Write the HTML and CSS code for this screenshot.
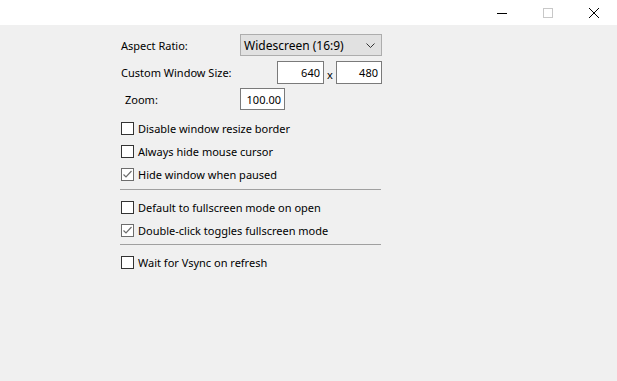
FILE: index.html
```html
<!DOCTYPE html>
<html>
<head>
<meta charset="utf-8">
<link rel="stylesheet" href="styles.css">
</head>
<body>
<div class="titlebar">
  <div class="tb-btn"><svg width="10" height="10" viewBox="0 0 10 10"><line x1="0" y1="5.5" x2="10" y2="5.5" stroke="#000" stroke-width="1"/></svg></div>
  <div class="tb-btn"><svg width="10" height="10" viewBox="0 0 10 10"><rect x="0.5" y="0.5" width="9" height="9" fill="none" stroke="#c8c8c8" stroke-width="1"/></svg></div>
  <div class="tb-btn"><svg width="10" height="10" viewBox="0 0 10 10"><path d="M0 0 L10 10 M10 0 L0 10" stroke="#000" stroke-width="1"/></svg></div>
</div>
<div class="content">
  <div class="row r1">
    <span class="label l1">Aspect Ratio:</span>
    <div class="combo"><span>Widescreen (16:9)</span><svg width="9" height="5" viewBox="0 0 9 5"><path d="M0.5 0.5 L4.5 4.5 L8.5 0.5" fill="none" stroke="#333" stroke-width="1"/></svg></div>
  </div>
  <div class="row r2">
    <span class="label l2">Custom Window Size:</span>
    <div class="tbox w47">640</div>
    <span class="times">x</span>
    <div class="tbox w46">480</div>
  </div>
  <div class="row r3">
    <span class="label l3">Zoom:</span>
    <div class="tbox w45">100.00</div>
  </div>
  <div class="checks">
    <div class="check"><span class="box"></span><span>Disable window resize border</span></div>
    <div class="check"><span class="box"></span><span>Always hide mouse cursor</span></div>
    <div class="check"><span class="box on"><svg width="11" height="11" viewBox="0 0 11 11"><path d="M1.5 5.5 L4 8 L9.5 2" fill="none" stroke="#6d6d6d" stroke-width="1.2"/></svg></span><span>Hide window when paused</span></div>
    <div class="sep s1"></div>
    <div class="check"><span class="box"></span><span>Default to fullscreen mode on open</span></div>
    <div class="check"><span class="box on"><svg width="11" height="11" viewBox="0 0 11 11"><path d="M1.5 5.5 L4 8 L9.5 2" fill="none" stroke="#6d6d6d" stroke-width="1.2"/></svg></span><span>Double-click toggles fullscreen mode</span></div>
    <div class="sep s2"></div>
    <div class="check"><span class="box"></span><span>Wait for Vsync on refresh</span></div>
  </div>
</div>
</body>
</html>
```
FILE: styles.css
```css
html, body {
  margin: 0;
  padding: 0;
  width: 617px;
  height: 381px;
  overflow: hidden;
  background: #f0f0f0;
  font-family: "Noto Sans", "DejaVu Sans", sans-serif;
  font-size: 11px;
  color: #000;
}
.titlebar {
  height: 25px;
  background: #fff;
  display: flex;
  justify-content: flex-end;
  align-items: center;
  box-sizing: border-box;
}
.tb-btn {
  width: 46px;
  height: 25px;
  display: flex;
  align-items: center;
  justify-content: center;
}
.content {
  padding-top: 9px;
  padding-left: 121px;
  display: flex;
  flex-direction: column;
}
.row {
  display: flex;
  align-items: center;
}
.r1 { height: 22px; }
.r2 { height: 23px; margin-top: 5px; }
.r3 { height: 22px; margin-top: 4px; }
.label { line-height: 1; }
.l1 { width: 119px; }
.l2 { width: 156px; }
.l3 { width: 115px; padding-left: 4px; }
.combo {
  width: 142px;
  height: 22px;
  box-sizing: border-box;
  border: 1px solid #adadad;
  background: #e1e1e1;
  display: flex;
  align-items: center;
  justify-content: space-between;
  padding: 0 6px 0 3px;
  font-size: 12px;
}
.tbox {
  height: 100%;
  box-sizing: border-box;
  border: 1px solid #7a7a7a;
  background: #fff;
  display: flex;
  align-items: center;
  justify-content: flex-end;
  padding-right: 3px;
}
.w47 { width: 47px; }
.w46 { width: 46px; }
.w45 { width: 45px; }
.times { width: 12px; text-align: center; padding-top: 3px; }
.checks {
  margin-top: 7px;
  display: flex;
  flex-direction: column;
}
.check {
  height: 23px;
  display: flex;
  align-items: center;
}
.box {
  width: 13px;
  height: 13px;
  box-sizing: border-box;
  border: 1px solid #333;
  background: #fff;
  margin-right: 4px;
  display: flex;
  align-items: center;
  justify-content: center;
}
.box.on { border-color: #6d6d6d; }
.sep {
  width: 261px;
  height: 1px;
  margin-left: -1px;
  background: #a0a0a0;
}
.s1 { margin-top: 3px; margin-bottom: 6px; }
.s2 { margin-top: 2px; margin-bottom: 6px; }
```
